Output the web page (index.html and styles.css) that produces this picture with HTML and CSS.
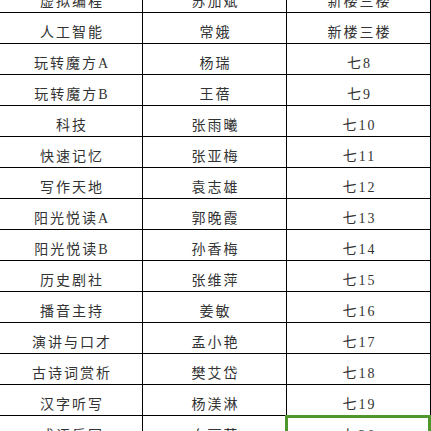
FILE: index.html
```html
<!DOCTYPE html>
<html lang="zh-CN">
<head>
<meta charset="utf-8">
<title>课程表</title>
<link rel="stylesheet" href="styles.css">
</head>
<body>
<div class="sheet">
  <div class="cell">虚拟编程</div><div class="cell">苏加斌</div><div class="cell">新楼三楼</div>
  <div class="cell">人工智能</div><div class="cell">常娥</div><div class="cell">新楼三楼</div>
  <div class="cell">玩转魔方A</div><div class="cell">杨瑞</div><div class="cell">七8</div>
  <div class="cell">玩转魔方B</div><div class="cell">王蓓</div><div class="cell">七9</div>
  <div class="cell">科技</div><div class="cell">张雨曦</div><div class="cell">七10</div>
  <div class="cell">快速记忆</div><div class="cell">张亚梅</div><div class="cell">七11</div>
  <div class="cell">写作天地</div><div class="cell">袁志雄</div><div class="cell">七12</div>
  <div class="cell">阳光悦读A</div><div class="cell">郭晚霞</div><div class="cell">七13</div>
  <div class="cell">阳光悦读B</div><div class="cell">孙香梅</div><div class="cell">七14</div>
  <div class="cell">历史剧社</div><div class="cell">张维萍</div><div class="cell">七15</div>
  <div class="cell">播音主持</div><div class="cell">姜敏</div><div class="cell">七16</div>
  <div class="cell">演讲与口才</div><div class="cell">孟小艳</div><div class="cell">七17</div>
  <div class="cell">古诗词赏析</div><div class="cell">樊艾岱</div><div class="cell">七18</div>
  <div class="cell">汉字听写</div><div class="cell">杨渼淋</div><div class="cell">七19</div>
  <div class="cell">成语乐园</div><div class="cell">白丽英</div><div class="cell selected">七20</div>
</div>
</body>
</html>
```
FILE: styles.css
```css
html, body {
  margin: 0;
  padding: 0;
  background: #ffffff;
  overflow: hidden;
  width: 431px;
  height: 431px;
}

.sheet {
  display: grid;
  grid-template-columns: 143px 144px 144px;
  grid-auto-rows: 31px;
  margin-top: -18px;
  font-family: "Liberation Serif", "Noto Sans CJK SC", serif;
  font-size: 14px;
  color: #333333;
}

.cell {
  box-sizing: border-box;
  border-right: 1px solid #000000;
  border-bottom: 1px solid #000000;
  display: flex;
  align-items: center;
  justify-content: center;
  padding-top: 5px;
  padding-left: 2px;
  letter-spacing: 2px;
  white-space: nowrap;
  position: relative;
}

.selected::after {
  content: "";
  position: absolute;
  left: -2px;
  top: -1px;
  width: 146px;
  height: 34px;
  box-sizing: border-box;
  border: 3px solid #4f962d;
}
```
